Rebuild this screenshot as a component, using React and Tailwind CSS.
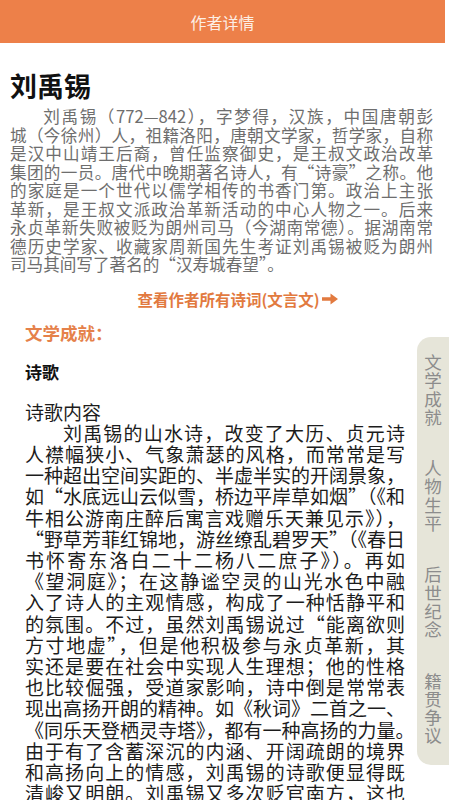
import React from "react";

const bio = [
  "刘禹锡（772—842），字梦得，汉族，中国唐朝彭",
  "城（今徐州）人，祖籍洛阳，唐朝文学家，哲学家，自称",
  "是汉中山靖王后裔，曾任监察御史，是王叔文政治改革",
  "集团的一员。唐代中晚期著名诗人，有“诗豪”之称。他",
  "的家庭是一个世代以儒学相传的书香门第。政治上主张",
  "革新，是王叔文派政治革新活动的中心人物之一。后来",
  "永贞革新失败被贬为朗州司马（今湖南常德）。据湖南常",
  "德历史学家、收藏家周新国先生考证刘禹锡被贬为朗州",
];

const poem = [
  "刘禹锡的山水诗，改变了大历、贞元诗",
  "人襟幅狭小、气象萧瑟的风格，而常常是写",
  "一种超出空间实距的、半虚半实的开阔景象，",
  "如“水底远山云似雪，桥边平岸草如烟”（《和",
  "牛相公游南庄醉后寓言戏赠乐天兼见示》），",
  "“野草芳菲红锦地，游丝缭乱碧罗天”（《春日",
  "书怀寄东洛白二十二杨八二庶子》）。再如",
  "《望洞庭》；在这静谧空灵的山光水色中融",
  "入了诗人的主观情感，构成了一种恬静平和",
  "的氛围。不过，虽然刘禹锡说过“能离欲则",
  "方寸地虚”，但是他积极参与永贞革新，其",
  "实还是要在社会中实现人生理想；他的性格",
  "也比较倔强，受道家影响，诗中倒是常常表",
  "现出高扬开朗的精神。如《秋词》二首之一、",
  "《同乐天登栖灵寺塔》，都有一种高扬的力量。",
  "由于有了含蓄深沉的内涵、开阔疏朗的境界",
  "和高扬向上的情感，刘禹锡的诗歌便显得既",
  "清峻又明朗。刘禹锡又多次贬官南方，这也",
];

const tabs = ["文学成就", "人物生平", "后世纪念", "籍贯争议"];

const Line = ({ text, first }) => (
  <div className={"whitespace-nowrap [text-align-last:justify] " + (first ? "indent-[2em]" : "")}>
    {text}
  </div>
);

export default function App() {
  return (
    <div className="relative h-[800px] overflow-hidden bg-white font-['Noto_Sans_CJK_SC','Noto_Sans',sans-serif]">
      <div className="mr-1 flex h-[43px] items-center justify-center bg-[#ed8049] text-[16px] text-[#fdeee4]">
        作者详情
      </div>

      <h1 className="mt-[29px] pl-[10px] text-[27px] font-bold leading-[27px] text-[#111]">刘禹锡</h1>

      <div className="mt-[8px] pl-[10px] pr-[16px] text-[16.6px] leading-[18.5px] text-[#6e6e6e]">
        {bio.map((l, i) => (
          <Line key={i} text={l} first={i === 0} />
        ))}
        <div className="whitespace-nowrap">司马其间写了著名的“汉寿城春望”。</div>
      </div>

      <div className="mt-[15px] flex items-center justify-center gap-[2px] pl-[26px] text-[15.5px] font-bold leading-[20px] text-[#e27a3f]">
        <span>查看作者所有诗词(文言文)</span>
        <svg width="16" height="12" viewBox="0 0 16 12">
          <path d="M0 4.2h8.5V0.5L16 6l-7.5 5.5V7.8H0z" fill="#e27a3f" />
        </svg>
      </div>

      <div className="pl-[25px] pr-[44px]">
        <h2 className="mt-[12px] text-[17.5px] font-bold leading-[24px] text-[#e5814a]">文学成就：</h2>
        <h3 className="mt-[15px] text-[17px] font-bold leading-[24px] text-[#111]">诗歌</h3>
        <div className="mt-[17px] text-[19px] leading-[21.2px] text-[#1c1c1c]">
          <div>诗歌内容</div>
          {poem.map((l, i) => (
            <Line key={i} text={l} first={i === 0} />
          ))}
        </div>
      </div>

      <div className="absolute right-0 top-[337px] flex h-[428px] w-[32px] flex-col items-center gap-[33px] rounded-l-[14px] bg-[#e6e5d9] pt-[16px] text-[17.5px] leading-[18.3px] text-[#8c8c8c]">
        {tabs.map((t) => (
          <div key={t} className="flex flex-col items-center">
            {t.split("").map((c, i) => (
              <span key={i}>{c}</span>
            ))}
          </div>
        ))}
      </div>
    </div>
  );
}
